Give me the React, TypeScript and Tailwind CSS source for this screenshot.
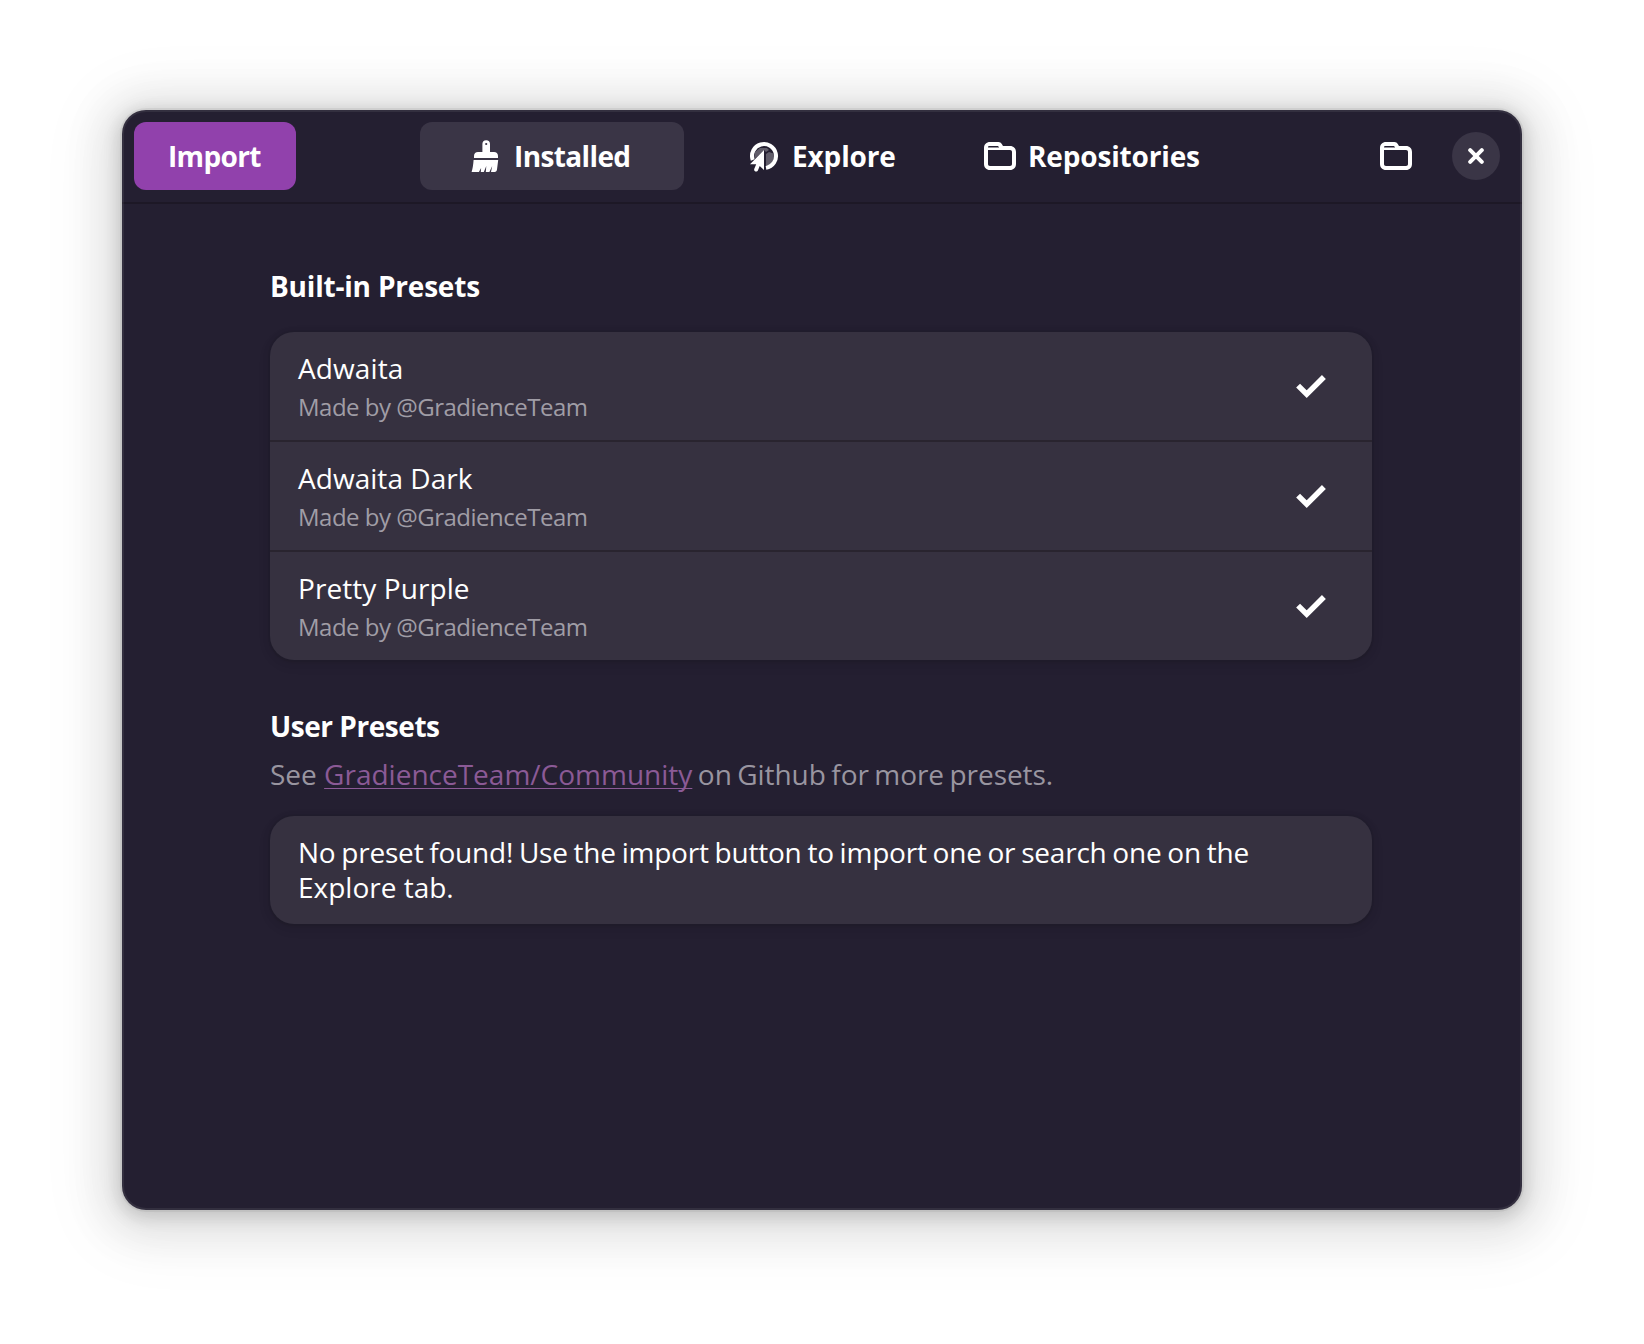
import type { ReactNode } from "react";

function FolderIcon() {
  return (
    <svg viewBox="0 0 32 32" className="size-8 shrink-0" fill="currentColor" fillRule="evenodd">
      <path d="M6 2h8.4c1.6 0 2.6.8 3.4 2l1.2 2H26c3.6 0 6 2.4 6 6v12c0 3.6-2.4 6-6 6H6c-3.6 0-6-2.4-6-6V8c0-3.6 2.4-6 6-6zM5.5 6C4.500 6 4 6.500 4 7.400h11.200L14 6zM4 10v14c0 1.3.7 2 2 2h20c1.3 0 2-.7 2-2V12c0-1.3-.7-2-2-2z" />
    </svg>
  );
}

function BrushIcon() {
  return (
    <svg viewBox="0 0 32 32" className="size-8 shrink-0" fill="currentColor" fillRule="evenodd">
      <path d="M12.4 4a3.8 3.8 0 0 1 7.6 0v8h4c2.4 0 4 1.600 4 4v2H4v-2c0-2.400 1.600-4 4-4h4.400zM16.200 2.900a1.100 1.100 0 1 0 0 2.200 1.100 1.100 0 0 0 0-2.200z" />
      <path d="M3.600 20h24.600L27 29.500c-.2 1.600-.9 2.500-2.400 2.500h-3.600l1.200-6-2.800 6h-3.600l.5-6-2.500 6h-3l.3-4-2.200 4h-7.300c1-3 1.600-7 2-12z" />
    </svg>
  );
}

function ExploreIcon() {
  return (
    <svg viewBox="0 0 32 32" className="size-8 shrink-0" fill="none">
      <path d="M18 27.850A12 12 0 1 0 4.700 20" stroke="currentColor" strokeWidth="4" />
      <path d="M18 14l3-2 4.500 1.500 1 4-2 4.500-3.500 3.500h-3zM7 12l5-4 7 0 2 2-3 2-2-2-4 4-6 5z" fill="currentColor" opacity=".28" />
      <path d="M16 10v20l-4.300-3.900-1.600 3.900c-1 2.700-4.800 1.500-3.800-1.200l1.900-4.600H2z" fill="currentColor" />
    </svg>
  );
}

function CheckIcon() {
  return (
    <svg viewBox="0 0 32 32" className="size-8 shrink-0" fill="none">
      <path d="M3.100 15.600l8.600 8.600L28.900 7" stroke="currentColor" strokeWidth="5.500" />
    </svg>
  );
}

function CloseIcon() {
  return (
    <svg viewBox="0 0 16 16" className="size-4" fill="none" stroke="currentColor" strokeWidth="4" strokeLinecap="round">
      <path d="M2.200 2.200l11.600 11.600M13.800 2.200L2.200 13.800" />
    </svg>
  );
}

function Tab({ className, icon, children }: { className: string; icon: ReactNode; children: ReactNode }) {
  return (
    <button className={`flex h-[68px] w-[264px] items-center gap-3 rounded-xl leading-9 ${className}`}>
      {icon}
      {children}
    </button>
  );
}

const cardClass =
  "rounded-3xl bg-[#363140] shadow-[0_0_0_2px_rgba(0,0,6,0.03),0_2px_6px_2px_rgba(0,0,6,0.07),0_4px_12px_4px_rgba(0,0,6,0.03)]";

const presets = [
  { name: "Adwaita", spacing: "tracking-[0.1px]" },
  { name: "Adwaita Dark", spacing: "tracking-[0.04px]" },
  { name: "Pretty Purple", spacing: "tracking-[0.07px]" },
];

export default function App() {
  return (
    <div className="flex h-[1344px] w-[1644px] justify-center bg-white pt-[110px] font-['Open_Sans',sans-serif] text-[28px] text-white">
      <div className="relative h-[1100px] w-[1400px] rounded-3xl bg-[#241f31] shadow-[0_4px_16px_4px_rgba(0,0,0,0.13),0_6px_40px_20px_rgba(0,0,0,0.09),0_8px_64px_32px_rgba(0,0,0,0.04),0_0_0_2px_rgba(0,0,0,0.05)]">
        <header className="flex h-[94px] items-start border-b-2 border-[#1d1826] px-3 pt-3 font-bold">
          <button className="h-[68px] w-[162px] rounded-xl bg-[#9141ac] pl-[34px] text-left leading-9 tracking-[-0.65px]">
            Import
          </button>
          <nav className="ml-[124px] flex gap-1.5">
            <Tab className="bg-[#3a3546] pl-[50px] tracking-[-0.62px]" icon={<BrushIcon />}>
              Installed
            </Tab>
            <Tab className="pl-[58px] tracking-[-0.14px]" icon={<ExploreIcon />}>
              Explore
            </Tab>
            <Tab className="pl-6 tracking-[-0.16px]" icon={<FolderIcon />}>
              Repositories
            </Tab>
          </nav>
          <div className="ml-auto flex h-[68px] items-center gap-10 pr-2.5">
            <button aria-label="Open folder">
              <FolderIcon />
            </button>
            <button aria-label="Close" className="flex size-12 items-center justify-center rounded-full bg-[#3a3546]">
              <CloseIcon />
            </button>
          </div>
        </header>

        <main className="mx-auto w-[1102px] -translate-x-px pt-16 leading-9">
          <h2 className="font-bold tracking-[-0.2px]">Built-in Presets</h2>
          <ul className={`mt-7 divide-y-2 divide-[#29242f] ${cardClass}`}>
            {presets.map((preset) => (
              <li key={preset.name} className="box-content flex h-[108px] items-start justify-between pr-[45px] pl-7">
                <div className="pt-[18px]">
                  <p className={preset.spacing}>{preset.name}</p>
                  <p className="mt-[5px] text-2xl leading-8 tracking-[-0.5px] text-[#a09da6]">Made by @GradienceTeam</p>
                </div>
                <div className="pt-[38px]">
                  <CheckIcon />
                </div>
              </li>
            ))}
          </ul>

          <h2 className="mt-12 font-bold tracking-[-0.45px]">User Presets</h2>
          <p className="mt-3 text-[#9995a0]">
            See{" "}
            <a className="text-[#8b5a96] underline decoration-1 underline-offset-[3px] [text-decoration-skip-ink:none]">GradienceTeam/Community</a>
            <span className="tracking-[-0.06px] [word-spacing:-1.7px]"> on Github for more presets.</span>
          </p>
          <div className={`mt-6 h-[108px] py-[19px] pr-24 pl-7 leading-[35px] ${cardClass}`}>
            <p className="tracking-[-0.21px] [word-spacing:-1.25px]">No preset found! Use the import button to import one or search one on the</p>
            <p>Explore tab.</p>
          </div>
        </main>
        <div className="pointer-events-none absolute inset-0 rounded-3xl border-2 border-white/7" />
      </div>
    </div>
  );
}
